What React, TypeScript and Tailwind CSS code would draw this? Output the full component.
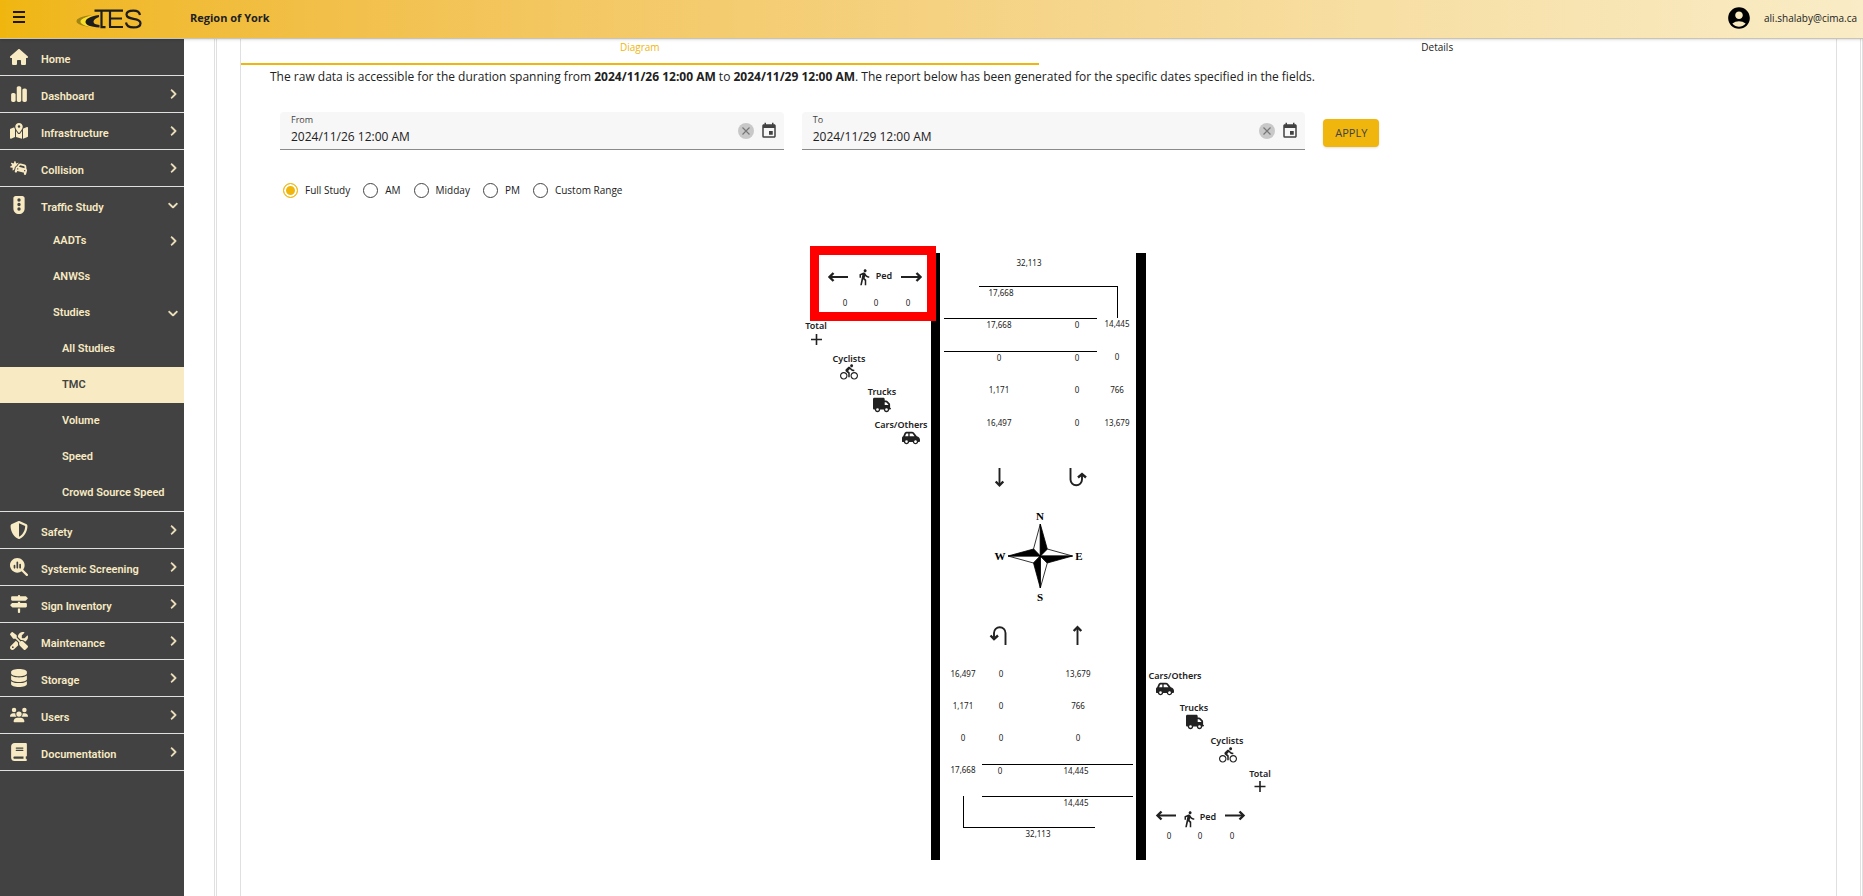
import { useState } from "react";
import type { ReactNode } from "react";
import type { IconType } from "react-icons";
import {
  FaBook,
  FaCarBurst,
  FaCarSide,
  FaChartSimple,
  FaChevronDown,
  FaChevronRight,
  FaDatabase,
  FaHouse,
  FaMagnifyingGlassChart,
  FaMapLocationDot,
  FaScrewdriverWrench,
  FaShieldHalved,
  FaSignsPost,
  FaTrafficLight,
  FaTruck,
  FaUsers,
} from "react-icons/fa6";
import { MdAccountCircle, MdDirectionsBike, MdDirectionsWalk, MdEvent } from "react-icons/md";

/* ---------- Header ---------- */

function Logo() {
  return (
    <svg viewBox="0 0 66 20" className="h-5 w-[66px]" role="img" aria-label="TES">
      <path d="M16 6C6 7 0 9.500 0.500 12.500c.5 2.500 5 4.500 14 5.500-5-1.500-9-3-9-5.500 0-2.500 4-4.500 10.500-6.500z" fill="#a08414" />
      <path d="M18 6.500C9 8 4.500 10 4.500 12.500c0 2.500 4 4.500 11 5.500-4-1.500-6-3.500-5.500-5.500C10.500 10 13 8 18 6.500z" fill="#fbe02a" />
      <path d="M23 6C14 7.500 9.500 10 9.500 13c0 3 5 5 14 5.500V16c-4-.5-6-1.500-6-3.300S20 9 23 8z" fill="#1d1d1b" />
      <g fill="none" stroke="#1d1d1b" strokeWidth="2.200">
        <path d="M18.500 1.600h17M25.500 1.600v16.500h4M34 1.600v15.500M33 18h14M35 1.600h12M35 9.500h11" />
        <path d="M64 6c-.5-3-2.500-4.400-6.500-4.400S50.500 3 50.500 5.600c0 2.700 2.500 3.400 7 4.200 4.500.700 7 1.500 7 4.400 0 2.900-2.500 4.200-7 4.200S50.500 17 50 13.500" />
      </g>
    </svg>
  );
}

function Header() {
  return (
    <header className="relative z-10 flex h-[39px] items-center border-b border-[#c8c4b8] bg-linear-to-r from-[#f0b60e] to-[#f9ecc6] pr-1.5 shadow-sm">
      <button type="button" aria-label="Toggle menu" className="ml-3 flex w-16 items-center pb-1">
        <svg viewBox="0 0 14 12" className="h-3 w-3.5" stroke="#1f1a08" strokeWidth="2">
          <path d="M1 1h12M1 6h12M1 11h12" />
        </svg>
      </button>
      <Logo />
      <h1 className="ml-12 pb-0.5 text-[11px] font-bold text-[#212121]">Region of York</h1>
      <div className="ml-auto flex items-center gap-3 pb-0.5">
        <MdAccountCircle className="size-[26px] text-black" />
        <span className="text-[10px] text-[#212121]">ali.shalaby@cima.ca</span>
      </div>
    </header>
  );
}

/* ---------- Sidebar ---------- */

type Child = { label: string; level: 1 | 2; chevron?: "right" | "down"; active?: boolean };

const studyItems: Child[] = [
  { label: "AADTs", level: 1, chevron: "right" },
  { label: "ANWSs", level: 1 },
  { label: "Studies", level: 1, chevron: "down" },
  { label: "All Studies", level: 2 },
  { label: "TMC", level: 2, active: true },
  { label: "Volume", level: 2 },
  { label: "Speed", level: 2 },
  { label: "Crowd Source Speed", level: 2 },
];

type Section = { label: string; icon: IconType; chevron?: "right" | "down"; items?: Child[] };

const sections: Section[] = [
  { label: "Home", icon: FaHouse },
  { label: "Dashboard", icon: FaChartSimple, chevron: "right" },
  { label: "Infrastructure", icon: FaMapLocationDot, chevron: "right" },
  { label: "Collision", icon: FaCarBurst, chevron: "right" },
  { label: "Traffic Study", icon: FaTrafficLight, chevron: "down", items: studyItems },
  { label: "Safety", icon: FaShieldHalved, chevron: "right" },
  { label: "Systemic Screening", icon: FaMagnifyingGlassChart, chevron: "right" },
  { label: "Sign Inventory", icon: FaSignsPost, chevron: "right" },
  { label: "Maintenance", icon: FaScrewdriverWrench, chevron: "right" },
  { label: "Storage", icon: FaDatabase, chevron: "right" },
  { label: "Users", icon: FaUsers, chevron: "right" },
  { label: "Documentation", icon: FaBook, chevron: "right" },
];

function Chevron({ kind }: { kind?: "right" | "down" }) {
  if (!kind) return null;
  const Icon = kind === "right" ? FaChevronRight : FaChevronDown;
  return (
    <span className="ml-auto flex w-3 justify-center">
      <Icon className="size-2.5 stroke-[36]" />
    </span>
  );
}

function Sidebar() {
  return (
    <nav className="w-[184px] shrink-0 bg-[#424242] font-[Roboto,sans-serif] text-[11px] font-semibold text-[#f8eac3]">
      <ul>
        {sections.map(({ label, icon: Icon, chevron, items }) => (
          <li key={label} className="border-b border-[#e0e0e0]">
            <a href="#" className="flex h-9 items-center pr-[5px] pl-2">
              <span className="flex w-[22px] justify-center">
                <Icon className="h-[18px] w-auto shrink-0" />
              </span>
              <span className="ml-[11px] pt-1.5">{label}</span>
              <Chevron kind={chevron} />
            </a>
            {items && (
              <ul>
                {items.map((item) => (
                  <li key={item.label}>
                    <a
                      href="#"
                      className={
                        "flex h-9 items-center pr-[5px] " +
                        (item.level === 1 ? "pl-[53px] " : "pl-[62px] ") +
                        (item.active ? "bg-[#f8eac3] text-[#424242]" : "")
                      }
                    >
                      <span>{item.label}</span>
                      <Chevron kind={item.chevron} />
                    </a>
                  </li>
                ))}
              </ul>
            )}
          </li>
        ))}
      </ul>
    </nav>
  );
}

/* ---------- Filters ---------- */

function DateField({ id, label, initial }: { id: string; label: string; initial: string }) {
  const [value, setValue] = useState(initial);
  return (
    <div className="flex h-[38px] flex-1 items-center gap-1.5 rounded-t border-b border-[#8a8a8a] bg-[#f7f7f7] pr-1.5 pl-[11px]">
      <div className="flex flex-1 flex-col">
        <label htmlFor={id} className="text-[9px] leading-3 text-[#424242]">
          {label}
        </label>
        <input
          id={id}
          value={value}
          onChange={(e) => setValue(e.target.value)}
          className="w-full bg-transparent text-xs leading-[22px] text-[#212121] outline-none"
        />
      </div>
      <button
        type="button"
        aria-label={"Clear " + label}
        onClick={() => setValue("")}
        className="flex size-4 items-center justify-center rounded-full bg-[#c8c8c8]"
      >
        <svg viewBox="0 0 8 8" className="size-2" stroke="#777" strokeWidth="1.200">
          <path d="M0.500 0.500l7 7M7.500 0.500l-7 7" />
        </svg>
      </button>
      <button type="button" aria-label={"Open " + label + " calendar"}>
        <MdEvent className="size-[18px] text-[#424242]" />
      </button>
    </div>
  );
}

const periods = ["Full Study", "AM", "Midday", "PM", "Custom Range"];

function PeriodPicker() {
  const [period, setPeriod] = useState(periods[0]);
  return (
    <fieldset className="flex gap-[13px]">
      {periods.map((p) => (
        <label key={p} className="flex items-center gap-[7px] text-[10px] leading-4 text-[#212121]">
          <input
            type="radio"
            name="period"
            checked={period === p}
            onChange={() => setPeriod(p)}
            className="size-[15px] appearance-none rounded-full border border-[#444] bg-white checked:border-[#f0b60e] checked:bg-[#f0b60e] checked:shadow-[inset_0_0_0_2px_white]"
          />
          {p}
        </label>
      ))}
    </fieldset>
  );
}

/* ---------- Turning movement diagram ---------- */

type Pos = { x: number; y: number };

function Node({ x, y, children }: Pos & { children: ReactNode }) {
  return (
    <span
      className="absolute flex -translate-x-1/2 -translate-y-1/2 items-center whitespace-nowrap"
      style={{ left: x, top: y }}
    >
      {children}
    </span>
  );
}

const counts: [string, number, number][] = [
  ["32,113", 229, 23],
  ["17,668", 201, 53],
  ["17,668", 199, 85],
  ["0", 277, 85],
  ["14,445", 317, 84],
  ["0", 199, 118],
  ["0", 277, 118],
  ["0", 317, 117],
  ["1,171", 199, 150],
  ["0", 277, 150],
  ["766", 317, 150],
  ["16,497", 199, 183],
  ["0", 277, 183],
  ["13,679", 317, 183],
  ["16,497", 163, 434],
  ["0", 201, 434],
  ["13,679", 278, 434],
  ["1,171", 163, 466],
  ["0", 201, 466],
  ["766", 278, 466],
  ["0", 163, 498],
  ["0", 201, 498],
  ["0", 278, 498],
  ["17,668", 163, 530],
  ["0", 200, 531],
  ["14,445", 276, 531],
  ["14,445", 276, 563],
  ["32,113", 238, 594],
  ["0", 45, 63],
  ["0", 76, 63],
  ["0", 108, 63],
  ["0", 369, 596],
  ["0", 400, 596],
  ["0", 432, 596],
];

const captions: [string, number, number][] = [
  ["Ped", 84, 36],
  ["Total", 16, 86],
  ["Cyclists", 49, 119],
  ["Trucks", 82, 152],
  ["Cars/Others", 101, 185],
  ["Cars/Others", 375, 436],
  ["Trucks", 394, 468],
  ["Cyclists", 427, 501],
  ["Total", 460, 534],
  ["Ped", 408, 577],
];

const roadUsers: [IconType, number, number][] = [
  [MdDirectionsWalk, 64, 37],
  [MdDirectionsBike, 49, 132],
  [MdDirectionsBike, 428, 515],
  [MdDirectionsWalk, 389, 579],
];

const vehicles: [IconType, number, number][] = [
  [FaTruck, 82, 165],
  [FaCarSide, 111, 198],
  [FaCarSide, 365, 449],
  [FaTruck, 395, 482],
];

function RoadDrawing() {
  return (
    <svg viewBox="0 0 480 620" className="block h-[620px] w-[480px]" aria-hidden="true">
      <g fill="#000">
        <rect x="131" y="13" width="9" height="607" />
        <rect x="336" y="13" width="10" height="607" />
      </g>
      <g fill="none" stroke="#000" strokeWidth="1" shapeRendering="crispEdges">
        <path d="M179 46.500h138.500v31.500M144 78.500h153M144 111.500h153" />
        <path d="M182 524.500h151M182 556.500h151M163.500 556v31.500h131.500" />
      </g>
      <g fill="none" stroke="#212121" strokeWidth="1.900">
        <path d="M30 37h18M101 37h19M358 575.500h18M425 575.500h18" />
        <path d="M199.500 228v17M277.500 405v-17" />
        <path d="M270.500 228v11.500a5.500 5.500 0 0 0 11.500 0V235" />
        <path d="M205.500 405v-12a5.500 5.500 0 0 0-11.500 0v4" />
      </g>
      <path d="M11 99.500h11M16.500 94v11M454.500 546.500h11M460 541v11" fill="none" stroke="#212121" strokeWidth="1.600" />
      <g fill="none" stroke="#212121" strokeWidth="2.400" strokeLinejoin="miter">
        <path d="M33.500 33l-4 4 4 4M116.500 33l4 4-4 4M361.500 571.500l-4 4 4 4M439.500 571.500l4 4-4 4" />
        <path d="M195.700 241.500l3.800 3.800 3.800-3.800M273.700 391l3.800-3.800 3.800 3.800" />
        <path d="M278 237.500l4-3.500 4 3.500M190.500 395.500l3.500 3.500 4-3.500" />
      </g>
      <g stroke="#000" strokeWidth="0.800" strokeLinejoin="miter">
        <path fill="#fff" d="M240.300 284l-6.800 25 6.800 7zM272.500 316l-25.200-7-7 7zM240.300 348l7-25-7-7zM208 316l25.500 7 6.800-7z" />
        <path fill="#000" d="M240.300 284l7 25-7 7zM272.500 316l-25.200 7-7-7zM240.300 348l-6.800-25 6.800-7zM208 316l25.500-7 6.800 7z" />
      </g>
      <g
        fill="#000"
        textAnchor="middle"
        className="font-['Liberation_Serif',serif] text-[11px] font-bold"
      >
        <text x="240" y="280">N</text>
        <text x="240" y="361">S</text>
        <text x="200" y="320">W</text>
        <text x="279" y="320">E</text>
      </g>
    </svg>
  );
}

function Diagram() {
  return (
    <div className="relative w-[480px] font-['Noto_Sans',sans-serif] text-[#212121]">
      <RoadDrawing />
      {counts.map(([text, x, y], i) => (
        <Node key={i} x={x} y={y}>
          <span className="text-[8px] leading-3">{text}</span>
        </Node>
      ))}
      {captions.map(([text, x, y], i) => (
        <Node key={i} x={x} y={y}>
          <span className="text-[9px] leading-3 font-semibold">{text}</span>
        </Node>
      ))}
      {roadUsers.map(([Icon, x, y], i) => (
        <Node key={i} x={x} y={y}>
          <Icon className="size-[18px]" />
        </Node>
      ))}
      {vehicles.map(([Icon, x, y], i) => (
        <Node key={i} x={x} y={y}>
          <Icon className="h-4 w-[18px]" />
        </Node>
      ))}
      <div className="absolute top-1.5 left-2.5 h-[75px] w-[126px] border-9 border-[#ff0000]" />
    </div>
  );
}

/* ---------- Page ---------- */

export default function App() {
  return (
    <div className="flex h-screen flex-col overflow-hidden bg-white font-['Open_Sans','Noto_Sans',sans-serif]">
      <Header />
      <div className="flex min-h-0 flex-1">
        <Sidebar />
        <main className="ml-[30px] flex min-w-0 flex-1 border-x border-[#e0e0e0] px-px">
          <div className="flex min-w-0 flex-1 border-x border-[#e0e0e0] px-[23px]">
            <section className="min-w-0 flex-1 border-x border-[#e0e0e0]">
              <div role="tablist" className="flex text-[10px] leading-4">
                <button
                  type="button"
                  role="tab"
                  aria-selected="true"
                  className="h-[26px] flex-1 border-b-2 border-[#f0b60e] pb-2 text-[#f0b60e]"
                >
                  Diagram
                </button>
                <button type="button" role="tab" aria-selected="false" className="h-[26px] flex-1 pb-2.5 text-[#212121]">
                  Details
                </button>
              </div>
              <p className="mt-1 ml-[29px] text-xs leading-4 text-[#212121]">
                The raw data is accessible for the duration spanning from <b>2024/11/26 12:00 AM</b> to{" "}
                <b>2024/11/29 12:00 AM</b>. The report below has been generated for the specific dates specified in the
                fields.
              </p>
              <form className="mt-[27px] ml-[39px] flex items-center" onSubmit={(e) => e.preventDefault()}>
                <div className="flex w-2/3 items-center gap-[18px] pr-3">
                  <DateField id="from" label="From" initial="2024/11/26 12:00 AM" />
                  <DateField id="to" label="To" initial="2024/11/29 12:00 AM" />
                </div>
                <button
                  type="submit"
                  className="mt-1 ml-1.5 h-7 w-14 rounded-sm bg-[#f0b60e] text-[11px] text-[#424242] shadow"
                >
                  APPLY
                </button>
              </form>
              <div className="mt-8 ml-[42px]">
                <PeriodPicker />
              </div>
              <div className="mt-[42px] flex justify-center pl-[3px]">
                <Diagram />
              </div>
            </section>
          </div>
        </main>
      </div>
    </div>
  );
}
